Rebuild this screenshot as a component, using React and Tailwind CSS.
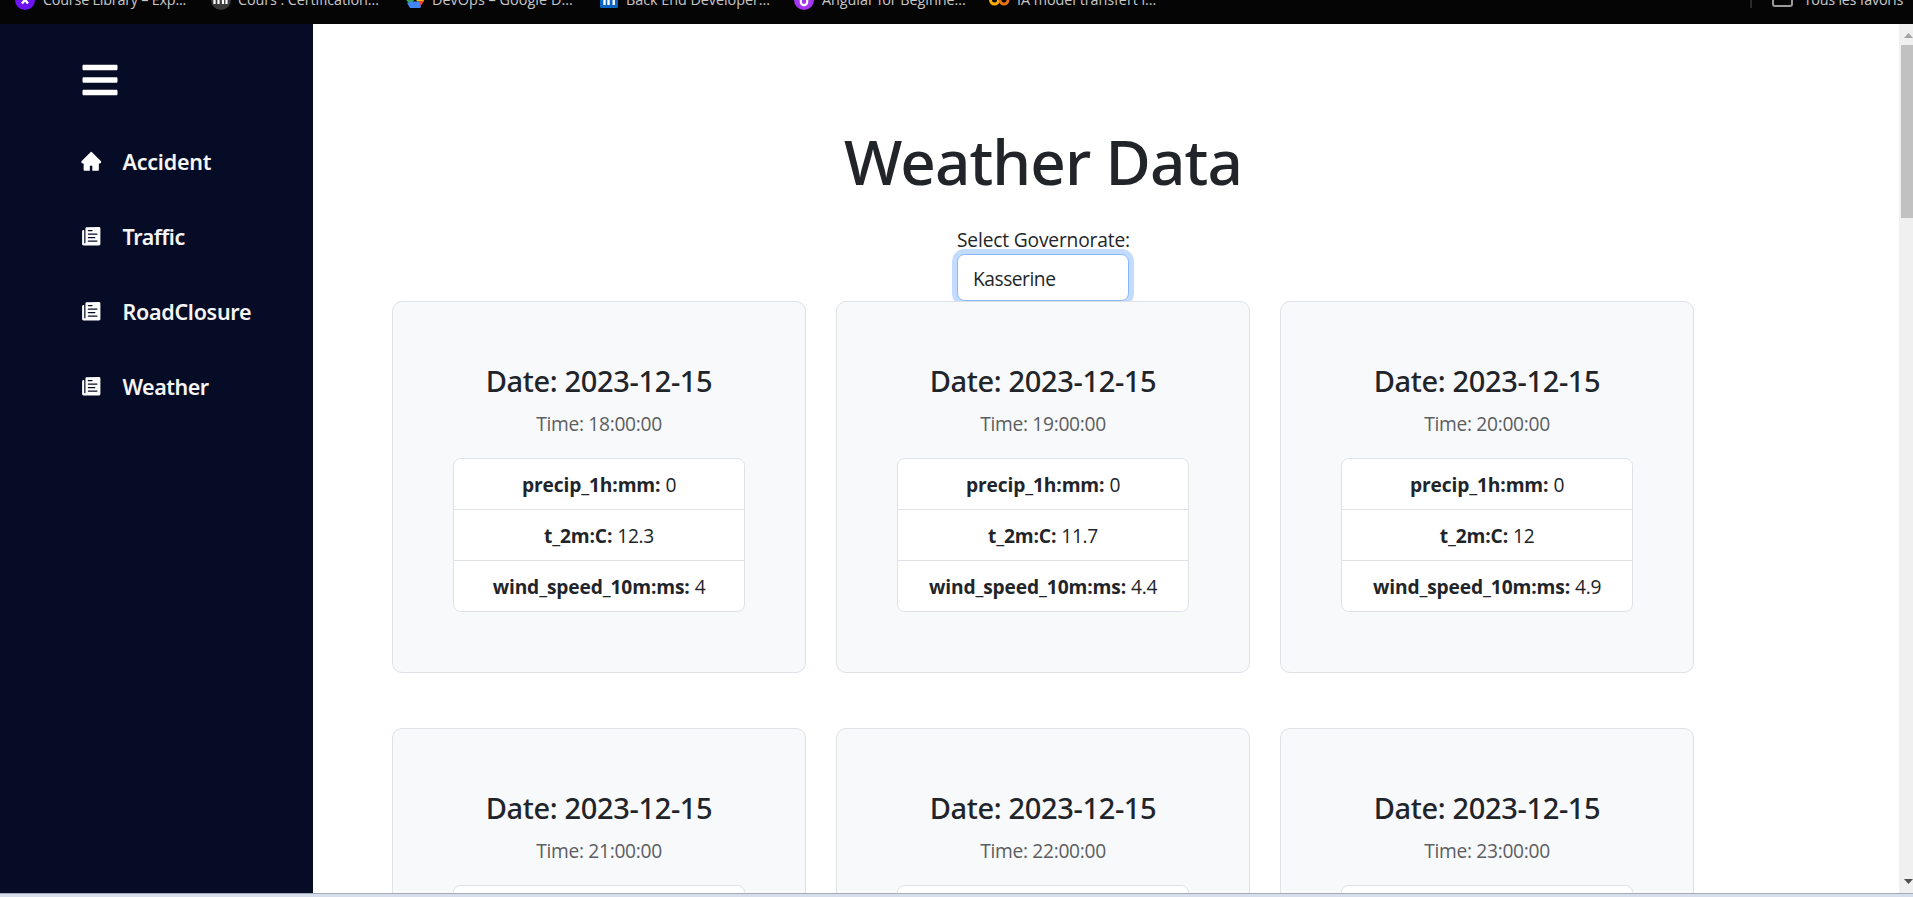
import React from "react";
import { FaBars } from "react-icons/fa";
import { AiFillHome } from "react-icons/ai";
import { IoIosPaper } from "react-icons/io";

const CourseIcon = () => (
  <svg width="20" height="20" viewBox="0 0 20 20">
    <circle cx="10" cy="10" r="10" fill="#6d14f5" />
    <path d="M7 6l6 7.5M13 6l-6 7.5" stroke="#fff" strokeWidth="2.4" />
  </svg>
);
const CertIcon = () => (
  <svg width="20" height="20" viewBox="0 0 20 20">
    <circle cx="10" cy="10" r="10" fill="#3a3a3a" />
    <path d="M3.5 14V7M7.5 14V7.5H12V14M15.5 14V7" stroke="#fff" strokeWidth="2.2" fill="none" />
  </svg>
);
const CloudIcon = () => (
  <svg width="20" height="20" viewBox="0 0 20 20">
    <path d="M1 10l4-7 4 7-3 5z" fill="#34a853" />
    <path d="M5 3h10l4 7h-6z" fill="#ea4335" />
    <path d="M9 8h9l1 3-4 3z" fill="#fbbc04" />
    <path d="M13 11h6l-4 6z" fill="#ea4335" />
    <path d="M5 11.5h9l2 5.5-1 1H5L2 13z" fill="#4285f4" />
  </svg>
);
const LinkIcon = () => (
  <svg width="20" height="20" viewBox="0 0 20 20">
    <rect x="0" y="0" width="18" height="18" rx="1.5" fill="#0a66c2" />
    <path d="M4.5 15V7M8.5 15V7M8.5 15v-5a2.7 2.7 0 0 1 5.2 0v5" stroke="#fff" strokeWidth="2.4" fill="none" />
  </svg>
);
const UIcon = () => (
  <svg width="20" height="20" viewBox="0 0 20 20">
    <circle cx="10" cy="10" r="10" fill="#a435f0" />
    <path d="M6.8 5v7a3.2 3.2 0 0 0 6.4 0V5" stroke="#fff" strokeWidth="2.2" fill="none" />
  </svg>
);
const ColabIcon = () => (
  <svg width="21" height="20" viewBox="0 0 21 20">
    <circle cx="5.5" cy="10" r="4" stroke="#f9ab00" strokeWidth="3" fill="none" />
    <circle cx="15" cy="10" r="4" stroke="#e8710a" strokeWidth="3" fill="none" />
  </svg>
);

const bookmarks = [
  { icon: CourseIcon, label: "Course Library – Exp...", box: "w-[196px] gap-2", text: "tracking-[-0.23px]" },
  { icon: CertIcon, label: "Cours : Certification...", box: "w-[194px] gap-[7px]", text: "tracking-[-0.1px]" },
  { icon: CloudIcon, label: "DevOps – Google D...", box: "w-[195px] gap-[7px]", text: "tracking-[0.04px]" },
  { icon: LinkIcon, label: "Back End Developer...", box: "w-[194px] gap-[6px]", text: "tracking-[-0.05px]" },
  { icon: UIcon, label: "Angular for Beginne...", box: "w-[195px] gap-2", text: "tracking-[-0.05px]" },
  { icon: ColabIcon, label: "IA model transfert i...", box: "w-[196px] gap-[7px]", text: "tracking-[-0.05px]" },
];

const links = [
  { icon: AiFillHome, label: "Accident", text: "tracking-[-0.22px]" },
  { icon: IoIosPaper, label: "Traffic", text: "tracking-[-0.45px]" },
  { icon: IoIosPaper, label: "RoadClosure", text: "tracking-[-0.3px]" },
  { icon: IoIosPaper, label: "Weather", text: "tracking-[-0.5px]" },
];

const cards = [
  { time: "18:00:00", precip: "0", temp: "12.3", wind: "4" },
  { time: "19:00:00", precip: "0", temp: "11.7", wind: "4.4" },
  { time: "20:00:00", precip: "0", temp: "12", wind: "4.9" },
  { time: "21:00:00" },
  { time: "22:00:00" },
  { time: "23:00:00" },
];

function BookmarksBar() {
  return (
    <header className="h-6 shrink-0 overflow-hidden bg-[#050505] text-[14.4px] text-[#c7c7c7]">
      <div className="-mt-[10px] flex h-5 items-start pl-[15px]">
        {bookmarks.map(({ icon: Icon, label, box, text }) => (
          <div key={label} className={`flex shrink-0 items-start whitespace-nowrap ${box}`}>
            <Icon />
            <span className={`leading-5 ${text}`}>{label}</span>
          </div>
        ))}
        <div className="ml-auto flex items-start pr-[10px]">
          <span className="mr-[20px] h-[18px] w-[2px] bg-[#2a2a2a]" />
          <svg width="21" height="17" viewBox="0 0 21 17" className="mr-[11px]">
            <path d="M1 1h7l2 3h10v10a2 2 0 0 1-2 2H3a2 2 0 0 1-2-2z" fill="none" stroke="#9a9a9a" strokeWidth="2" />
          </svg>
          <span className="leading-5 tracking-[-0.25px]">Tous les favoris</span>
        </div>
      </div>
    </header>
  );
}

function Sidebar() {
  return (
    <nav className="w-[313px] shrink-0 bg-[#060b26] pl-20 text-[#f5f5f5]">
      <div className="h-[100px] pt-9">
        <FaBars className="size-10 text-white" />
      </div>
      <ul>
        {links.map(({ icon: Icon, label, text }) => (
          <li key={label} className="flex h-[75px] items-center gap-5">
            <Icon className="size-[22.5px] text-white" />
            <span className={`pt-0.5 font-['Noto_Sans',sans-serif] text-[21.5px] font-semibold ${text}`}>{label}</span>
          </li>
        ))}
      </ul>
    </nav>
  );
}

function Reading({ name, value }) {
  return (
    <li className="h-[51px] border-b border-[#dee2e6] text-center leading-[52px] last:h-[50px] last:border-b-0">
      <strong className="font-bold tracking-[-0.13px]">{name}:</strong>{" "}
      <span className="tracking-[-0.3px]">{value}</span>
    </li>
  );
}

function WeatherCard({ time, precip, temp, wind }) {
  return (
    <article className="relative h-[372px] rounded-[10px] border border-[#dee2e6] bg-[#f8f9fb] px-[60px] pt-[61px]">
      <h4 className="mb-[10px] text-center font-['Noto_Sans',sans-serif] text-[29px] leading-9 font-medium tracking-[-0.35px]">
        Date: 2023-12-15
      </h4>
      <p className="mb-[19px] text-center leading-[30px] tracking-[-0.3px] text-[#5b5e62]">Time: {time}</p>
      <ul className="min-h-[154px] rounded-[7.5px] border border-[#dee2e6] bg-white">
        {precip !== undefined && (
          <>
            <Reading name="precip_1h:mm" value={precip} />
            <Reading name="t_2m:C" value={temp} />
            <Reading name="wind_speed_10m:ms" value={wind} />
          </>
        )}
      </ul>
    </article>
  );
}

function Scrollbar() {
  return (
    <div className="flex w-[14px] shrink-0 flex-col items-end bg-[#f0f0f0]">
      <svg width="9" height="21" viewBox="0 0 9 21">
        <path d="M0 14L4.500 9L9 14z" fill="#a3a3a3" />
      </svg>
      <div className="h-[173px] w-3 bg-[#c1c1c1]" />
      <svg width="9" height="21" viewBox="0 0 9 21" className="mt-auto">
        <path d="M0 7H9L4.500 12z" fill="#505050" />
      </svg>
    </div>
  );
}

export default function App() {
  return (
    <div className="flex h-[897px] w-[1913px] flex-col overflow-hidden bg-white font-['Open_Sans',sans-serif] text-[19.2px] text-[#212529]">
      <BookmarksBar />
      <div className="flex min-h-0 flex-1">
        <Sidebar />
        <main className="min-w-0 flex-1 overflow-hidden pt-[99px] pr-[205px] pl-[79px]">
          <h1 className="mb-[25px] text-center font-['Noto_Sans',sans-serif] text-[62px] leading-[76px] font-medium tracking-[-0.9px]">
            Weather Data
          </h1>
          <div className="mx-auto w-[172px]">
            <label className="block h-[30px] leading-8 tracking-[-0.17px] whitespace-nowrap">Select Governorate:</label>
            <div className="h-[47px] rounded-[7.5px] border border-[#86b7fe] bg-white pt-px pl-[15px] leading-[45px] tracking-[-0.47px] shadow-[0_0_0_5px_#c2dbfe]">
              Kasserine
            </div>
          </div>
          <div className="grid grid-cols-[repeat(3,414px)] gap-x-[30px] gap-y-[55px]">
            {cards.map((card) => (
              <WeatherCard key={card.time} {...card} />
            ))}
          </div>
        </main>
        <Scrollbar />
      </div>
      <footer className="h-1 shrink-0 border-t border-[#a3abba] bg-[#d6deeb]" />
    </div>
  );
}
